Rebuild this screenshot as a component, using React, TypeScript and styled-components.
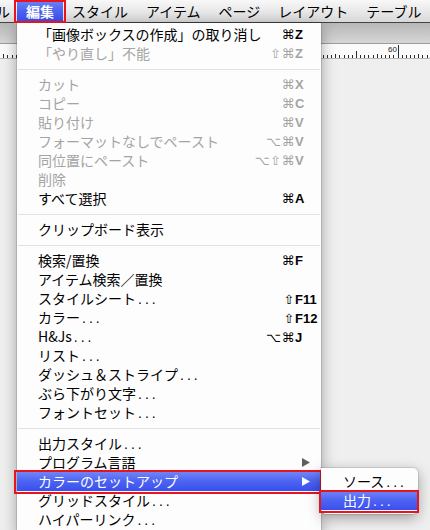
import styled, { createGlobalStyle } from 'styled-components'

type Entry =
    | { sep: true }
    | {
          sep?: false
          label: string
          dots?: boolean
          mods?: string
          keyName?: string
          disabled?: boolean
          sub?: boolean
          active?: boolean
      }

const menuItems: Entry[] = [
    { label: '「画像ボックスの作成」の取り消し', mods: '⌘', keyName: 'Z' },
    { label: '「やり直し」不能', mods: '⇧⌘', keyName: 'Z', disabled: true },
    { sep: true },
    { label: 'カット', mods: '⌘', keyName: 'X', disabled: true },
    { label: 'コピー', mods: '⌘', keyName: 'C', disabled: true },
    { label: '貼り付け', mods: '⌘', keyName: 'V', disabled: true },
    { label: 'フォーマットなしでペースト', mods: '⌥⌘', keyName: 'V', disabled: true },
    { label: '同位置にペースト', mods: '⌥⇧⌘', keyName: 'V', disabled: true },
    { label: '削除', disabled: true },
    { label: 'すべて選択', mods: '⌘', keyName: 'A' },
    { sep: true },
    { label: 'クリップボード表示' },
    { sep: true },
    { label: '検索/置換', mods: '⌘', keyName: 'F' },
    { label: 'アイテム検索／置換' },
    { label: 'スタイルシート', dots: true, mods: '⇧', keyName: 'F11' },
    { label: 'カラー', dots: true, mods: '⇧', keyName: 'F12' },
    { label: 'H&Js', dots: true, mods: '⌥⌘', keyName: 'J' },
    { label: 'リスト', dots: true },
    { label: 'ダッシュ＆ストライプ', dots: true },
    { label: 'ぶら下がり文字', dots: true },
    { label: 'フォントセット', dots: true },
    { sep: true },
    { label: '出力スタイル', dots: true },
    { label: 'プログラム言語', sub: true },
    { label: 'カラーのセットアップ', sub: true, active: true },
    { label: 'グリッドスタイル', dots: true },
    { label: 'ハイパーリンク', dots: true },
]

const barItems = ['スタイル', 'アイテム', 'ページ', 'レイアウト', 'テーブル']

export default function App() {
    return (
        <Screen>
            <GlobalStyle />
            <MenuBar>
                <BarItem $first>ル</BarItem>
                <BarItem $active>編集</BarItem>
                {barItems.map((name) => (
                    <BarItem key={name}>{name}</BarItem>
                ))}
            </MenuBar>
            <Toolbar />
            <RulerStrip />
            <Canvas />

            <Dropdown>
                {menuItems.map((item, index) =>
                    item.sep ? (
                        <Separator key={index} />
                    ) : (
                        <Row key={index} $disabled={item.disabled} $active={item.active}>
                            <span>
                                {item.label}
                                {item.dots && <Dots>...</Dots>}
                            </span>
                            <Mods>{item.mods}</Mods>
                            <KeyCell>
                                {item.keyName}
                                {item.sub && (
                                    <Arrow viewBox="0 0 8 9" $active={item.active}>
                                        <polygon points="0,0 8,4.5 0,9" />
                                    </Arrow>
                                )}
                            </KeyCell>
                        </Row>
                    )
                )}
            </Dropdown>

            <SubMenu>
                <SubRow>
                    ソース<Dots>...</Dots>
                </SubRow>
                <SubRow $active>
                    出力<Dots>...</Dots>
                </SubRow>
            </SubMenu>
        </Screen>
    )
}

function RulerStrip() {
    const ticks = []
    for (let k = -8; k < 100; k++) {
        const x = 398 - k * 4.15
        if (x < 0) break
        let h = 3
        if (k % 20 === 0) h = 13
        else if (k % 10 === 0) h = 7
        else if (k % 5 === 0) h = 4
        ticks.push(<line key={k} x1={x} x2={x} y1={14 - h} y2={14} />)
    }
    return (
        <Ruler viewBox="0 0 430 14">
            <g stroke="#2a2a2a" strokeWidth="1" shapeRendering="crispEdges">
                {ticks}
            </g>
            <text x="388" y="8" fontSize="8" fontFamily="Liberation Sans, sans-serif" fill="#222">
                60
            </text>
        </Ruler>
    )
}

const GlobalStyle = createGlobalStyle`
    html, body {
        margin: 0;
        padding: 0;
    }
    body {
        width: 430px;
        height: 530px;
        overflow: hidden;
        background: #eeeeee;
        font-family: "Noto Sans CJK JP", "Liberation Sans", sans-serif;
    }
`

const highlight = 'linear-gradient(to bottom, #6f84f6 0%, #4c63f2 50%, #3a4fee 100%)'

const Screen = styled.div`
    position: relative;
    width: 430px;
    height: 530px;
    overflow: hidden;
    display: flex;
    flex-direction: column;
    background: #eeeeee;
`

const MenuBar = styled.div`
    height: 22px;
    flex: none;
    display: flex;
    align-items: stretch;
    background: linear-gradient(to bottom, #f8f8f8, #d9d9d9);
    border-bottom: 1px solid #454545;
    font-size: 14px;
    line-height: 22px;
    color: #000;
`

const BarItem = styled.div<{ $active?: boolean; $first?: boolean }>`
    position: relative;
    padding: ${(p) => (p.$first ? '0 7px 0 0' : '0 9px')};
    margin-left: ${(p) => (p.$first ? '-4px' : '0')};
    white-space: nowrap;
    background: ${(p) => (p.$active ? highlight : 'none')};
    color: ${(p) => (p.$active ? '#fff' : '#000')};
    font-weight: ${(p) => (p.$active ? 700 : 400)};

    ${(p) =>
        p.$active &&
        `
        &::after {
            content: '';
            position: absolute;
            left: -3px;
            right: -3px;
            top: 0;
            bottom: -1px;
            border: 2px solid #e8141b;
            z-index: 5;
        }
    `}
`

const Toolbar = styled.div`
    height: 20px;
    flex: none;
    background: linear-gradient(to bottom, #b7b7b7, #d6d6d6);
    border-bottom: 1px solid #9c9c9c;
`

const Ruler = styled.svg`
    display: block;
    flex: none;
    width: 430px;
    height: 14px;
    background: #fbfbfb;
    border-bottom: 1px solid #b8b8b8;
`

const Canvas = styled.div`
    flex: 1;
    background: #efefef;
`

const Dropdown = styled.div`
    position: absolute;
    left: 17px;
    top: 23px;
    width: 304px;
    padding: 2px 0 4px;
    background: #fdfdfd;
    box-shadow: 0 4px 14px rgba(0, 0, 0, 0.35), 0 0 0 1px rgba(0, 0, 0, 0.12);
    font-size: 14px;
    z-index: 2;
`

const Row = styled.div<{ $disabled?: boolean; $active?: boolean }>`
    position: relative;
    height: 19px;
    line-height: 19px;
    display: grid;
    grid-template-columns: 1fr auto 26px;
    align-items: center;
    padding-left: 21px;
    white-space: nowrap;
    color: ${(p) => (p.$active ? '#fff' : p.$disabled ? '#a4a4a4' : '#000')};
    background: ${(p) => (p.$active ? highlight : 'none')};

    ${(p) =>
        p.$active &&
        `
        &::after {
            content: '';
            position: absolute;
            left: -3px;
            right: -1px;
            top: -2px;
            bottom: -3px;
            border: 2px solid #e8141b;
        }
    `}
`

const Separator = styled.div`
    height: 1px;
    margin: 6px 1px 5px;
    background: #e2e2e2;
`

const Dots = styled.span`
    font-family: "Liberation Sans", sans-serif;
    letter-spacing: 3px;
    margin-left: 2px;
`

const Mods = styled.span`
    font-family: "DejaVu Sans", sans-serif;
    font-size: 13px;
    text-align: right;
    letter-spacing: 0.5px;
`

const KeyCell = styled.span`
    display: flex;
    align-items: center;
    font-family: "Liberation Sans", sans-serif;
    font-weight: 700;
    font-size: 13px;
`

const Arrow = styled.svg<{ $active?: boolean }>`
    width: 8px;
    height: 9px;
    margin-left: 7px;
    fill: ${(p) => (p.$active ? '#fff' : '#606060')};
`

const SubMenu = styled.div`
    position: absolute;
    left: 321px;
    top: 468px;
    width: 97px;
    padding: 4px 0;
    background: #fdfdfd;
    border-radius: 0 5px 5px 5px;
    box-shadow: 0 4px 14px rgba(0, 0, 0, 0.35), 0 0 0 1px rgba(0, 0, 0, 0.1);
    font-size: 14px;
    z-index: 3;
`

const SubRow = styled.div<{ $active?: boolean }>`
    position: relative;
    height: 19px;
    line-height: 19px;
    padding-left: 22px;
    white-space: nowrap;
    color: ${(p) => (p.$active ? '#fff' : '#000')};
    background: ${(p) => (p.$active ? highlight : 'none')};

    ${(p) =>
        p.$active &&
        `
        &::after {
            content: '';
            position: absolute;
            left: -2px;
            right: -1px;
            top: -1px;
            bottom: -3px;
            border: 2px solid #e8141b;
        }
    `}
`
